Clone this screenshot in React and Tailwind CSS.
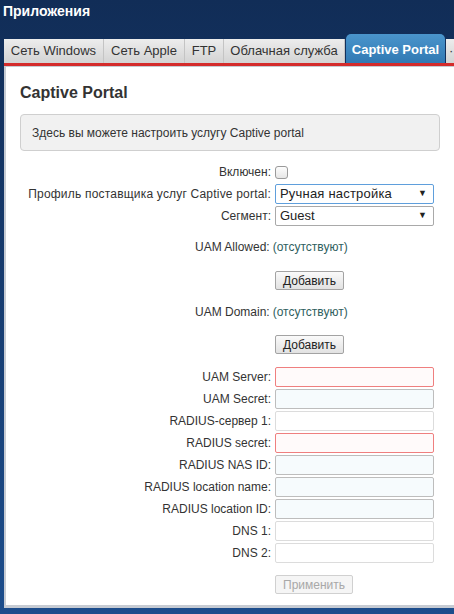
import { useState } from 'react';

const tabs = [
  { name: 'Сеть Windows', w: 'w-[100px]' },
  { name: 'Сеть Apple', w: 'w-[81px]' },
  { name: 'FTP', w: 'w-[39px]' },
  { name: 'Облачная служба', w: 'w-[121px]' },
];

const fields = [
  { label: 'UAM Server:', kind: 'error' },
  { label: 'UAM Secret:', kind: 'filled' },
  { label: 'RADIUS-сервер 1:', kind: 'plain' },
  { label: 'RADIUS secret:', kind: 'error' },
  { label: 'RADIUS NAS ID:', kind: 'filled' },
  { label: 'RADIUS location name:', kind: 'filled' },
  { label: 'RADIUS location ID:', kind: 'filled' },
  { label: 'DNS 1:', kind: 'plain' },
  { label: 'DNS 2:', kind: 'plain' },
];

const inputStyles = {
  error: 'border-[#ef7f7f] bg-[#fffafa]',
  filled: 'border-[#bdbdbd] bg-[#f6fbfd]',
  plain: 'border-[#dcdcdc] bg-white',
};

function Row({ label, children, className = '' }) {
  return (
    <div className={`flex items-center ${className}`}>
      <div className="w-[265px] whitespace-nowrap text-right">{label}</div>
      <div className="ml-[4px] flex items-center">{children}</div>
    </div>
  );
}

function FakeSelect({ value, focused }) {
  return (
    <div
      className={`flex h-[20px] w-[159px] items-center justify-between rounded-[2px] border bg-white pl-[4px] pr-[6px] text-[13px] text-[#222] ${
        focused ? 'border-[#5f9fdc]' : 'border-[#a9a9a9]'
      }`}
    >
      <span>{value}</span>
      <span className="text-[9px]">▼</span>
    </div>
  );
}

function GrayButton({ children, disabled }) {
  return (
    <button
      type="button"
      disabled={disabled}
      className={`h-[19px] rounded-[2px] border px-[7px] text-[12px] leading-none ${
        disabled
          ? 'border-[#d0d0d0] bg-[#f5f5f5] text-[#a8a8a8]'
          : 'border-[#a3a3a3] bg-gradient-to-b from-[#fafafa] to-[#e2e2e2] text-[#222]'
      }`}
    >
      {children}
    </button>
  );
}

export default function App() {
  const [enabled, setEnabled] = useState(false);

  return (
    <div className="h-[614px] w-[454px] overflow-hidden bg-gradient-to-b from-[#112d57] to-[#1c4d8c] font-['Liberation_Sans',Arial,sans-serif]">
      <h1 className="h-[34px] pl-[3px] pt-[2px] text-[14px] font-bold leading-[18px] text-white">
        Приложения
      </h1>

      <nav className="ml-[4px] flex h-[29px] items-end">
        {tabs.map((tab) => (
          <div
            key={tab.name}
            className={`flex h-[24px] shrink-0 items-center justify-center whitespace-nowrap border-r border-[#c4c4c4] bg-gradient-to-b from-[#ededed] to-[#d3d3d3] text-[13px] text-[#333] ${tab.w}`}
          >
            {tab.name}
          </div>
        ))}
        <div className="ml-[1px] flex h-[29px] w-[99px] shrink-0 items-center justify-center whitespace-nowrap rounded-t-[5px] bg-gradient-to-b from-[#4a95cc] to-[#3179b3] pt-[2px] text-[13px] font-bold text-white">
          Captive Portal
        </div>
        <div className="ml-[1px] flex h-[24px] flex-1 items-center bg-gradient-to-b from-[#ededed] to-[#d3d3d3] pl-[3px] text-[13px] text-[#333]">
          ·
        </div>
      </nav>
      <div className="ml-[4px] h-[3px] bg-[#d42b2b]" />

      <main className="ml-[4px] h-[542px] border-b-[3px] border-l-2 border-t border-[#c6cbd3] bg-white text-[12px] text-[#333]">
        <h2 className="ml-[14px] mt-[16px] text-[16px] font-bold leading-[20px]">Captive Portal</h2>

        <div className="ml-[14px] mt-[11px] flex h-[37px] w-[420px] items-center rounded-[4px] border border-[#cfcfcf] bg-[#f1f1f1] pl-[11px]">
          Здесь вы можете настроить услугу Captive portal
        </div>

        <div className="mt-[10px]">
          <Row label="Включен:" className="h-[22px]">
            <button
              type="button"
              onClick={() => setEnabled(!enabled)}
              className="h-[13px] w-[13px] rounded-[3px] border border-[#9a9a9a] bg-gradient-to-b from-[#fdfdfd] to-[#e6e6e6]"
            >
              {enabled && <span className="block text-[10px] leading-[11px]">✓</span>}
            </button>
          </Row>
          <Row label="Профиль поставщика услуг Captive portal:" className="h-[22px] tracking-[0.2px]">
            <FakeSelect value="Ручная настройка" focused />
          </Row>
          <Row label="Сегмент:" className="h-[22px]">
            <FakeSelect value="Guest" />
          </Row>

          <div className="mt-[10px] flex h-[20px] items-center pl-[189px]">
            UAM Allowed: <span className="ml-[3px] text-[#2f6060]">(отсутствуют)</span>
          </div>
          <div className="mt-[14px] pl-[269px]">
            <GrayButton>Добавить</GrayButton>
          </div>

          <div className="mt-[12px] flex h-[20px] items-center pl-[189px]">
            UAM Domain: <span className="ml-[3px] text-[#2f6060]">(отсутствуют)</span>
          </div>
          <div className="mt-[13px] pl-[269px]">
            <GrayButton>Добавить</GrayButton>
          </div>

          <div className="mt-[13px] flex flex-col gap-[2px]">
            {fields.map((f) => (
              <Row key={f.label} label={f.label}>
                <input
                  type="text"
                  className={`h-[20px] w-[159px] rounded-[2px] border outline-none ${inputStyles[f.kind]}`}
                />
              </Row>
            ))}
          </div>

          <div className="mt-[12px] pl-[269px]">
            <GrayButton disabled>Применить</GrayButton>
          </div>
        </div>
      </main>
    </div>
  );
}
